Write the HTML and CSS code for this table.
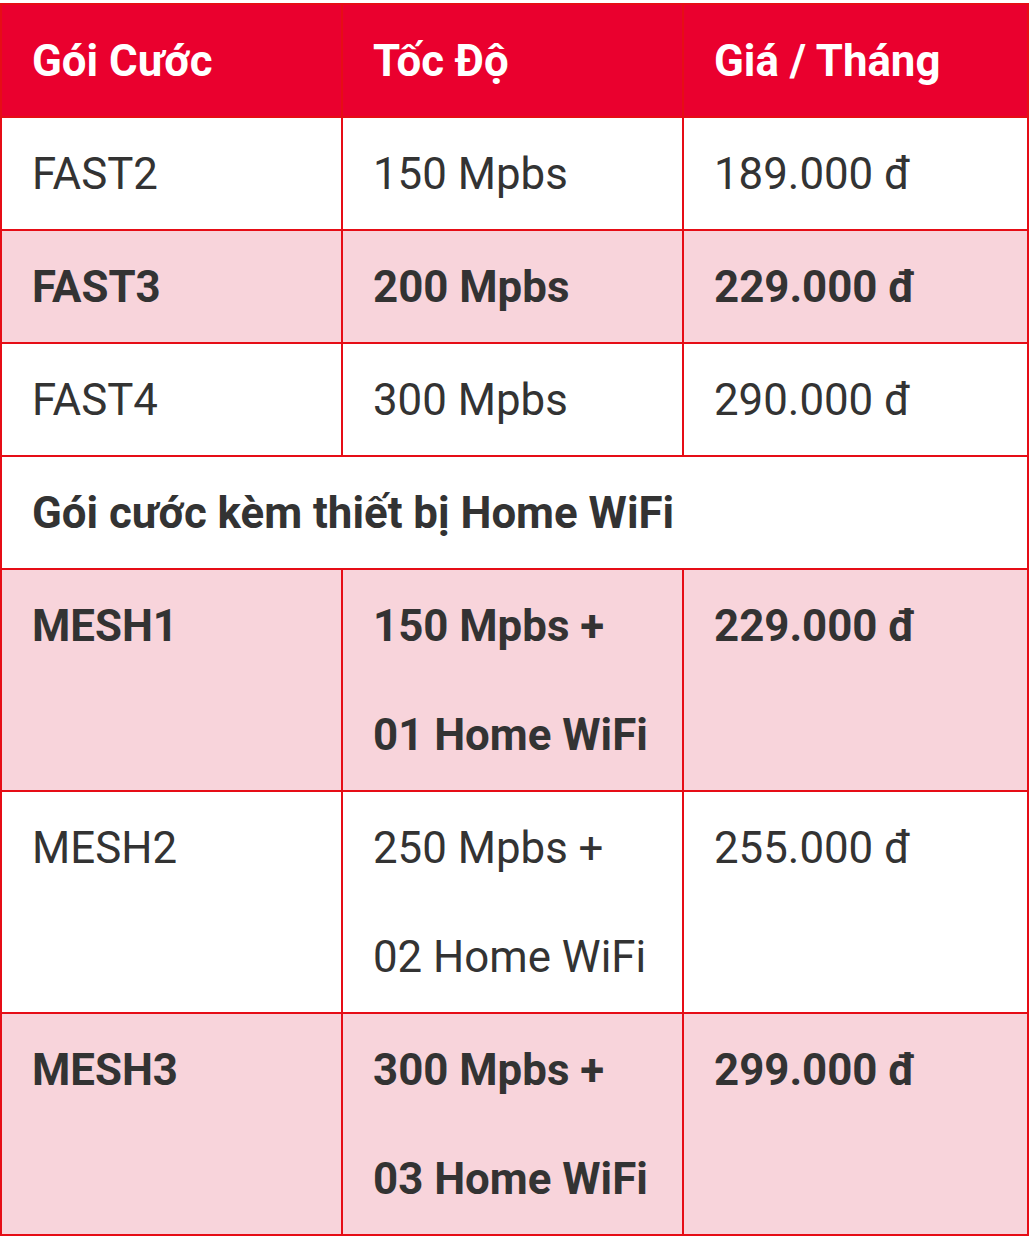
FILE: index.html
```html
<!DOCTYPE html>
<html lang="vi">
<head>
<meta charset="utf-8">
<title>Bảng giá</title>
<link rel="stylesheet" href="styles.css">
</head>
<body>
<table class="price-table">
  <colgroup>
    <col class="c1"><col class="c2"><col class="c3">
  </colgroup>
  <thead>
    <tr>
      <th>Gói Cước</th>
      <th>Tốc Độ</th>
      <th>Giá / Tháng</th>
    </tr>
  </thead>
  <tbody>
    <tr>
      <td>FAST2</td>
      <td>150 Mpbs</td>
      <td>189.000 đ</td>
    </tr>
    <tr class="hl">
      <td>FAST3</td>
      <td>200 Mpbs</td>
      <td>229.000 đ</td>
    </tr>
    <tr>
      <td>FAST4</td>
      <td>300 Mpbs</td>
      <td>290.000 đ</td>
    </tr>
    <tr class="section">
      <td colspan="3">Gói cước kèm thiết bị Home WiFi</td>
    </tr>
    <tr class="hl">
      <td>MESH1</td>
      <td>150 Mpbs +<br>01 Home WiFi</td>
      <td>229.000 đ</td>
    </tr>
    <tr>
      <td>MESH2</td>
      <td>250 Mpbs +<br>02 Home WiFi</td>
      <td>255.000 đ</td>
    </tr>
    <tr class="hl">
      <td>MESH3</td>
      <td>300 Mpbs +<br>03 Home WiFi</td>
      <td>299.000 đ</td>
    </tr>
  </tbody>
</table>
</body>
</html>
```
FILE: styles.css
```css
html, body {
  margin: 0;
  padding: 0;
  background: #ffffff;
}

body {
  padding-top: 3px;
  font-family: Roboto, "Liberation Sans", Arial, sans-serif;
}

.price-table {
  width: 1027px;
  border-collapse: collapse;
  table-layout: fixed;
  border: 2px solid #e60d16;
  color: #333333;
  font-size: 43.8px;
}

.price-table col.c1 { width: 341px; }
.price-table col.c2 { width: 341px; }
.price-table col.c3 { width: 345px; }

.price-table th,
.price-table td {
  border: 2px solid #e60d16;
  padding: 2px 26px 0 30px;
  line-height: 109px;
  text-align: left;
  vertical-align: top;
}

.price-table th {
  background: #ea002e;
  color: #ffffff;
  font-weight: 700;
}

.price-table td {
  font-weight: 400;
}

.price-table tr.hl td {
  background: #f8d4db;
  font-weight: 700;
}

.price-table tr.section td {
  font-weight: 700;
}
```
